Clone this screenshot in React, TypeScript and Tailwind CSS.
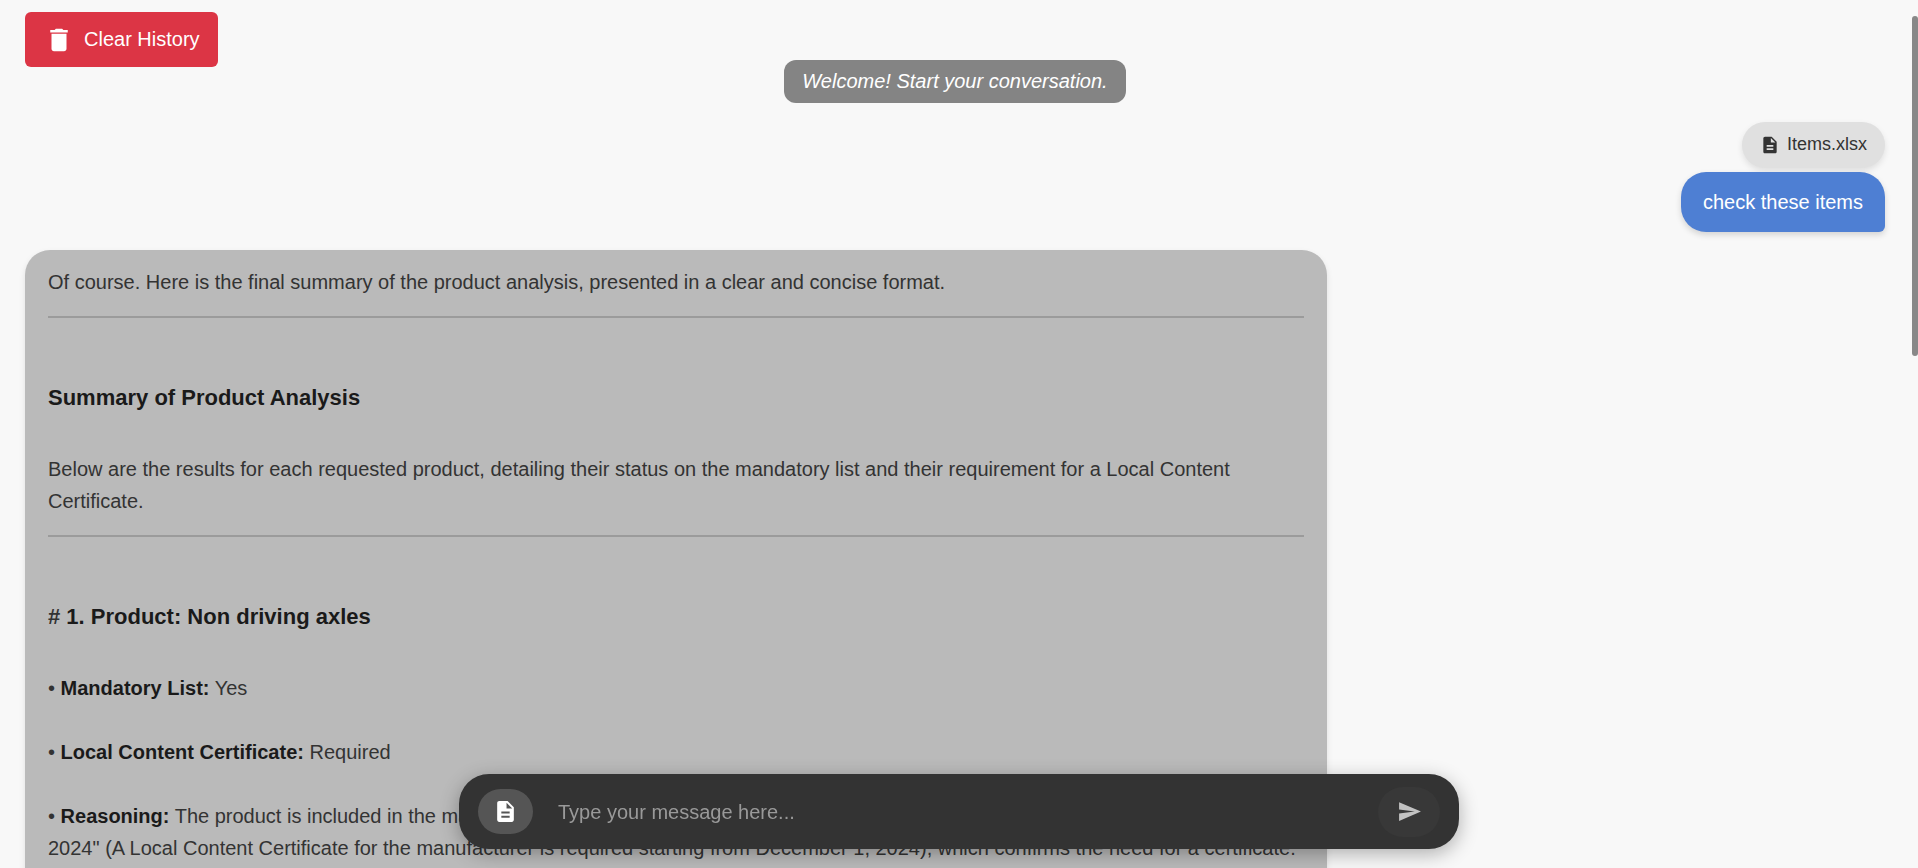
import { MdDelete, MdDescription, MdSend } from "react-icons/md";

function Fact({ label, children }: { label: string; children: React.ReactNode }) {
  return (
    <p>
      • <strong className="font-bold text-[#1a1a1a]">{label}</strong> {children}
    </p>
  );
}

function Divider() {
  return <hr className="mt-[18px] mb-[62px] border-t-2 border-[#9b9b9b]" />;
}

function Title({ prefix, children }: { prefix?: string; children: React.ReactNode }) {
  return (
    <h2 className="mb-[38px] text-[22px] leading-[35px] font-bold">
      {prefix ? `${prefix} ` : null}
      <strong className="text-[#1a1a1a]">{children}</strong>
    </h2>
  );
}

export default function App() {
  return (
    <div className="h-screen overflow-hidden bg-[#f8f8f8] font-['Liberation_Sans',Arial,sans-serif] text-xl text-[#333333]">
      <button
        type="button"
        className="fixed top-3 left-[25px] z-10 flex h-[55px] items-center gap-[10px] rounded-md bg-[#dc3545] pr-[18px] pl-[19px] text-white"
      >
        <MdDelete className="size-[30px]" aria-hidden="true" />
        <span className="pb-0.5">Clear History</span>
      </button>

      <main className="flex flex-col pt-[60px] pr-[33px] pl-[25px]">
        <p className="self-center rounded-xl bg-[#848484] px-[18px] py-[6px] leading-[31px] text-white italic">
          Welcome! Start your conversation.
        </p>

        <section className="mt-[19px] flex flex-col items-end gap-1">
          <div className="flex h-[46px] items-center gap-[7px] rounded-[25px] bg-[#e0e0e0] px-[18px] text-lg shadow-[0_3px_6px_rgba(0,0,0,0.1)]">
            <MdDescription className="size-5" aria-hidden="true" />
            <span className="pb-0.5">Items.xlsx</span>
          </div>
          <p className="rounded-[25px] rounded-br-[6px] bg-[#4e7fd3] px-[22px] py-[14px] leading-8 text-white shadow-[0_3px_6px_rgba(0,0,0,0.15)]">
            check these items
          </p>
        </section>

        <article className="mt-[18px] w-[70%] rounded-[25px] bg-[#bababa] px-[23px] py-4 leading-8 shadow-[0_3px_6px_rgba(0,0,0,0.1)]">
          <p>Of course. Here is the final summary of the product analysis, presented in a clear and concise format.</p>
          <Divider />
          <Title>Summary of Product Analysis</Title>
          <p>
            Below are the results for each requested product, detailing their status on the mandatory list and their
            requirement for a Local Content Certificate.
          </p>
          <Divider />
          <Title prefix="#">1. Product: Non driving axles</Title>
          <div className="flex flex-col gap-8">
            <Fact label="Mandatory List:">Yes</Fact>
            <Fact label="Local Content Certificate:">Required</Fact>
            <Fact label="Reasoning:">
              The product is included in the mandatory list of local products and its notes state that it is
              &quot;Required starting from December 1, 2024&quot; (A Local Content Certificate for the manufacturer is
              required starting from December 1, 2024), which confirms the need for a certificate.
            </Fact>
          </div>
          <Divider />
        </article>
      </main>

      <div className="fixed top-4 right-0 h-[340px] w-[6px] rounded-full bg-[#888888]" aria-hidden="true" />

      <form
        className="fixed inset-x-0 bottom-[19px] mx-auto flex h-[75px] w-full max-w-[1000px] items-center rounded-[30px] bg-[#333333] px-[19px] shadow-[0_5px_19px_rgba(0,0,0,0.3)]"
        onSubmit={(event) => event.preventDefault()}
      >
        <button
          type="button"
          aria-label="Attach file"
          className="flex h-[45px] w-[55px] items-center justify-center rounded-[25px] bg-[#555555] text-white"
        >
          <MdDescription className="size-[25px]" aria-hidden="true" />
        </button>
        <input
          type="text"
          aria-label="Message"
          placeholder="Type your message here..."
          className="min-w-0 flex-1 bg-transparent px-[25px] text-white outline-none placeholder:text-[#999999]"
        />
        <button
          type="submit"
          aria-label="Send"
          className="flex h-[50px] w-[62px] items-center justify-center rounded-[25px] bg-[#383838] text-[#c2c2c2]"
        >
          <MdSend className="size-[25px]" aria-hidden="true" />
        </button>
      </form>
    </div>
  );
}
